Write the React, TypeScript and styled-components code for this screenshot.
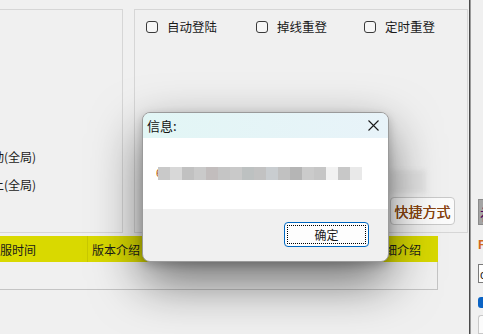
import React from "react";
import styled, { createGlobalStyle } from "styled-components";

const Global = createGlobalStyle`
  html, body { margin: 0; padding: 0; background: #f0f0f0; }
  body { font-family: "Noto Sans CJK SC", "Noto Sans", sans-serif; color: #1a1a1a; }
`;

const Page = styled.div`
  position: relative;
  width: 483px;
  height: 334px;
  overflow: hidden;
  display: flex;
  background: #f0f0f0;
`;

const Main = styled.div`
  width: 469px;
  display: flex;
  flex-direction: column;
`;

const Divider = styled.div`
  width: 2px;
  background: linear-gradient(to right, #4a4a4a 0 1px, #9a9a9a 1px 2px);
`;

const Side = styled.div`
  flex: 1;
  display: flex;
  flex-direction: column;
  padding: 199px 0 0 7px;
  overflow: hidden;
`;

const SideBox = styled.div`
  width: 12px;
  height: 29px;
  background: #a4a4a4;
  border: 1px solid #8a8a8a;
  border-right: none;
  box-sizing: border-box;
  font-size: 15px;
  line-height: 27px;
  color: #4b005a;
  padding-left: 1px;
  overflow: hidden;
  white-space: nowrap;
`;

const SideLetter = styled.div`
  margin-top: 14px;
  font-family: "Liberation Sans", sans-serif;
  font-weight: bold;
  font-size: 13px;
  line-height: 12px;
  color: #d2691e;
`;

const SideInput = styled.div`
  margin-top: 13px;
  height: 22px;
  background: #fff;
  border: 1px solid #7a7a7a;
  border-right: none;
  box-sizing: border-box;
  font-family: "Liberation Sans", sans-serif;
  font-size: 12px;
  line-height: 20px;
  padding-left: 1px;
  overflow: hidden;
`;

const SideCheck = styled.div`
  margin-top: 14px;
  height: 12px;
  background: #0a63c4;
  border-radius: 3px 0 0 3px;
`;

const SideBottom = styled.div`
  margin-top: 7px;
  height: 20px;
  background: #fbfbfb;
  border: 1px solid #c8c8c8;
  border-right: none;
  border-radius: 3px 0 0 0;
`;

const Panels = styled.div`
  display: flex;
  gap: 11px;
  padding-top: 9px;
  height: 224px;
`;

const LeftPanel = styled.div`
  width: 123px;
  border: 1px solid #d6d6d6;
  border-left: none;
  overflow: hidden;
  display: flex;
  flex-direction: column;
  gap: 14px;
  padding-top: 140px;
  box-sizing: border-box;
`;

const CutLabel = styled.div`
  margin-left: -20px;
  font-size: 12px;
  line-height: 14px;
  white-space: nowrap;
  color: #1a1a1a;
`;

const RightPanel = styled.div`
  flex: 1;
  margin-right: 1px;
  border: 1px solid #d6d6d6;
  box-sizing: border-box;
  display: flex;
  flex-direction: column;
  padding: 10px 12px 7px 11px;
`;

const CheckRow = styled.div`
  display: flex;
`;

const CheckItem = styled.label<{ $w: number }>`
  width: ${(p) => p.$w}px;
  display: flex;
  align-items: center;
  gap: 9px;
  font-size: 12.5px;
  line-height: 14px;
  color: #1a1a1a;
`;

const Box = styled.span`
  width: 12px;
  height: 12px;
  box-sizing: border-box;
  border: 1px solid #3a3a3a;
  border-radius: 3px;
  background: #f6f6f6;
`;

const Smudge = styled.div`
  margin-top: auto;
  margin-left: 244px;
  width: 36px;
  height: 23px;
  background: #e3e3e3;
  filter: blur(2px);
`;

const ShortcutBtn = styled.button`
  margin-top: 4px;
  align-self: flex-end;
  width: 65px;
  height: 28px;
  border: 1px solid #c9c9c9;
  border-radius: 4px;
  background: #fbfbfb;
  font-family: "Noto Sans CJK SC", sans-serif;
  font-size: 14px;
  color: #8b4513;
  text-shadow: 0 0 0.6px #6b3000;
  padding: 0;
`;

const YellowBar = styled.div`
  margin-top: 3px;
  width: 438px;
  height: 26px;
  background: #d9d900;
  display: flex;
  align-items: center;
  font-size: 12px;
  color: #1a1a1a;
`;

const Col = styled.div<{ $w: number; $pad: number; $line?: boolean }>`
  width: ${(p) => p.$w}px;
  height: 100%;
  box-sizing: border-box;
  padding-left: ${(p) => p.$pad}px;
  display: flex;
  align-items: center;
  white-space: nowrap;
  overflow: hidden;
  border-right: ${(p) => (p.$line ? "1px solid #c8c800" : "none")};
`;

const TableBody = styled.div`
  width: 438px;
  height: 28px;
  box-sizing: border-box;
  border-right: 1px solid #c4c4c4;
  border-bottom: 1px solid #c4c4c4;
`;

const Dialog = styled.div`
  position: absolute;
  left: 142px;
  top: 112px;
  width: 247px;
  height: 150px;
  box-sizing: border-box;
  border: 1px solid #9a9a9a;
  border-radius: 8px;
  overflow: hidden;
  display: flex;
  flex-direction: column;
  background: #f0f0f0;
  box-shadow: 0 20px 50px rgba(0, 0, 0, 0.55), 0 3px 10px rgba(0, 0, 0, 0.2);
`;

const TitleBar = styled.div`
  height: 25px;
  background: linear-gradient(to right, #e2f6f5, #e8f3f9);
  display: flex;
  align-items: center;
  justify-content: space-between;
  padding: 0 9px 0 4px;
`;

const Title = styled.span`
  font-size: 13px;
  color: #111;
`;

const Content = styled.div`
  height: 71px;
  background: #fff;
  display: flex;
  align-items: flex-start;
  padding: 29px 0 0 13px;
  box-sizing: border-box;
`;

const Mosaic = styled.div`
  display: flex;
  align-items: center;
  height: 13px;
`;

const Lead = styled.span`
  font-family: "Liberation Sans", sans-serif;
  font-size: 11px;
  color: #b05a10;
  width: 2px;
  overflow: hidden;
  line-height: 13px;
`;

const Tile = styled.span<{ $c: string }>`
  width: 12px;
  height: 13px;
  background: ${(p) => p.$c};
`;

const Footer = styled.div`
  flex: 1;
  display: flex;
  justify-content: flex-end;
  align-items: flex-start;
  padding: 13px 19px 0 0;
`;

const OkButton = styled.button`
  width: 85px;
  height: 25px;
  border: 1px solid #0067c0;
  border-radius: 4px;
  background: #fdfdfd;
  padding: 2px;
  box-sizing: border-box;
  font-family: "Noto Sans CJK SC", sans-serif;
  font-size: 12px;
  color: #1a1a1a;
`;

const FocusRing = styled.span`
  display: flex;
  align-items: center;
  justify-content: center;
  height: 100%;
  border: 1px dotted #000;
  box-sizing: border-box;
`;

const tiles = [
  "#c9c9c9", "#d8d8d8", "#c1c1c1", "#cacaca", "#c2bdbd", "#c5c5c5",
  "#c9c9c9", "#bdc1c1", "#c2c2c2", "#c9cdd0", "#c1c1c1", "#b5b5b5",
  "#cbcbcb", "#c6c6c6", "#f2f2f2", "#c8c8c8", "#e9e9e9",
];

export default function App() {
  return (
    <>
      <Global />
      <Page>
        <Main>
          <Panels>
            <LeftPanel>
              <CutLabel>自动(全局)</CutLabel>
              <CutLabel>禁上(全局)</CutLabel>
            </LeftPanel>
            <RightPanel>
              <CheckRow>
                <CheckItem $w={110}>
                  <Box />
                  自动登陆
                </CheckItem>
                <CheckItem $w={108}>
                  <Box />
                  掉线重登
                </CheckItem>
                <CheckItem $w={80}>
                  <Box />
                  定时重登
                </CheckItem>
              </CheckRow>
              <Smudge />
              <ShortcutBtn>快捷方式</ShortcutBtn>
            </RightPanel>
          </Panels>
          <YellowBar>
            <Col $w={88} $pad={0} $line>
              服时间
            </Col>
            <Col $w={280} $pad={4}>
              版本介绍
            </Col>
            <Col $w={70} $pad={5}>
              详细介绍
            </Col>
          </YellowBar>
          <TableBody />
        </Main>
        <Divider />
        <Side>
          <SideBox>初</SideBox>
          <SideLetter>F</SideLetter>
          <SideInput>c</SideInput>
          <SideCheck />
          <SideBottom />
        </Side>
        <Dialog>
          <TitleBar>
            <Title>信息:</Title>
            <svg width="11" height="11" viewBox="0 0 11 11">
              <path d="M0.5 0.5 L10.5 10.5 M10.5 0.5 L0.5 10.5" stroke="#1a1a1a" strokeWidth="1.1" />
            </svg>
          </TitleBar>
          <Content>
            <Mosaic>
              <Lead>6</Lead>
              {tiles.map((c, i) => (
                <Tile key={i} $c={c} />
              ))}
            </Mosaic>
          </Content>
          <Footer>
            <OkButton>
              <FocusRing>确定</FocusRing>
            </OkButton>
          </Footer>
        </Dialog>
      </Page>
    </>
  );
}
